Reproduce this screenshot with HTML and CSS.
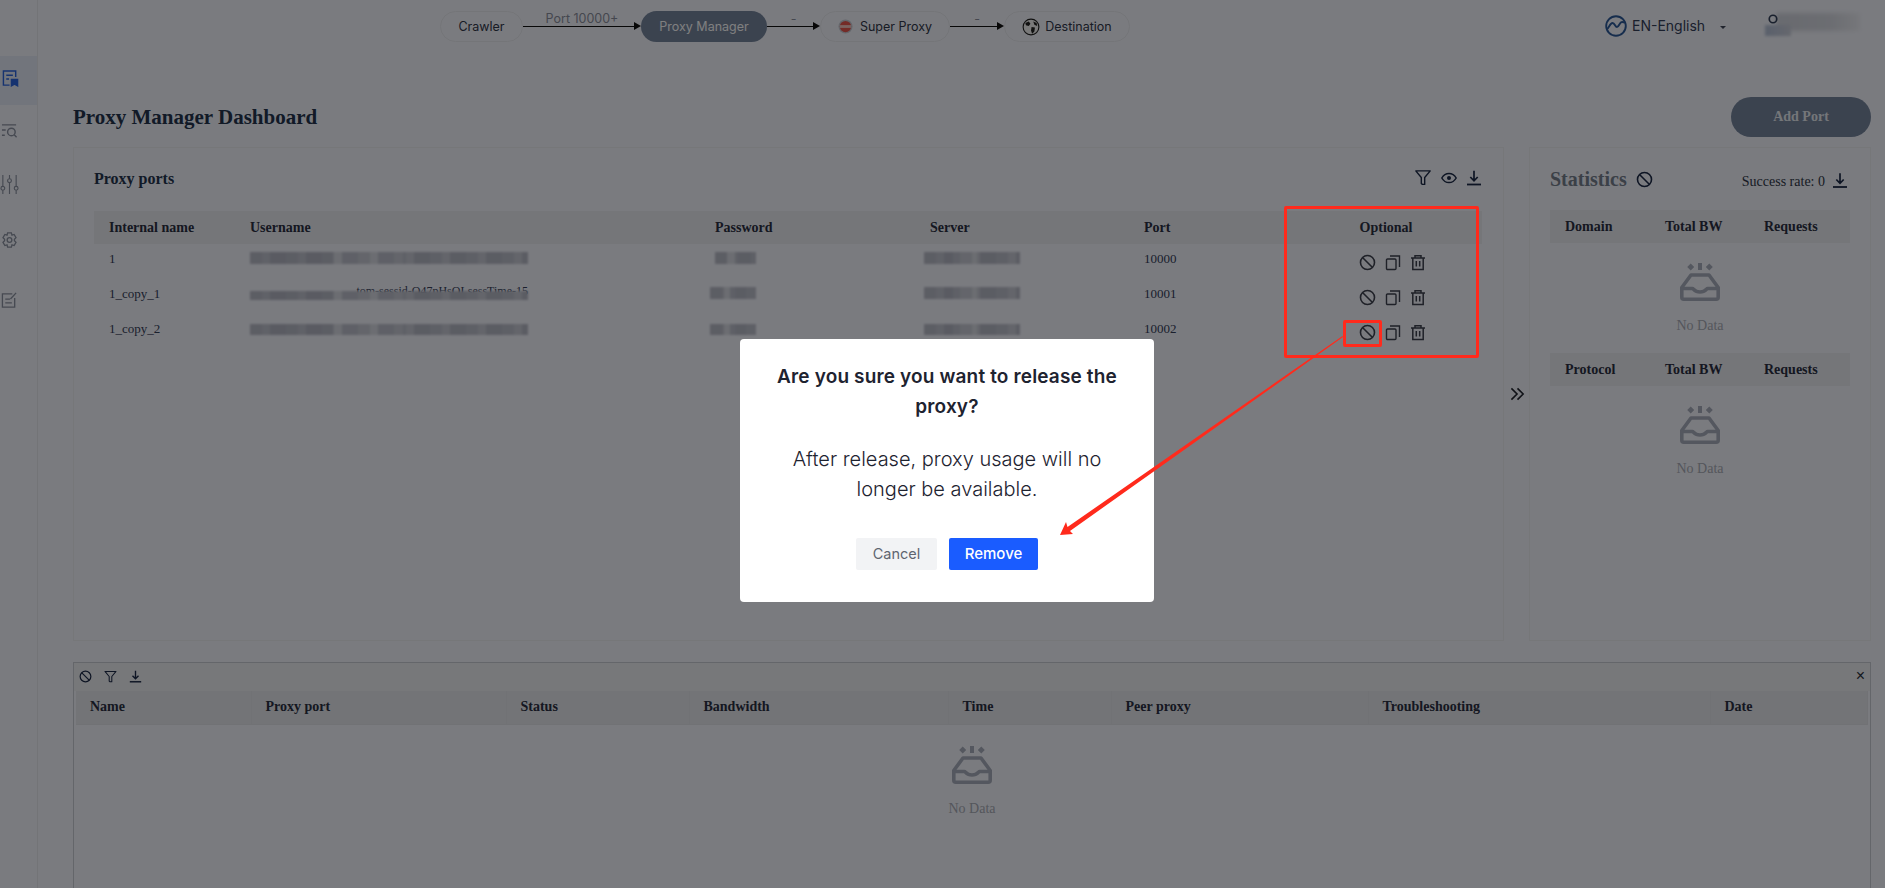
FILE: index.html
```html
<!DOCTYPE html>
<html>
<head>
    <title>Proxy Manager Dashboard</title>
    <link rel="stylesheet" href="styles.css">
</head>
<body>
    <!-- shared icons -->
    <svg class="defs" aria-hidden="true">
        <symbol id="i-ban" viewBox="0 0 16 16">
            <circle cx="8" cy="8" r="6.6" fill="none" stroke="currentColor" stroke-width="1.5"/>
            <path d="M3.5 3.5l9 9" stroke="currentColor" stroke-width="1.5"/>
        </symbol>
        <symbol id="i-copy" viewBox="0 0 16 16">
            <rect x="1.5" y="4.5" width="9.5" height="10.5" rx="1" fill="none" stroke="currentColor" stroke-width="1.4"/>
            <path d="M5 1.5h9.500v11" fill="none" stroke="currentColor" stroke-width="1.4"/>
        </symbol>
        <symbol id="i-trash" viewBox="0 0 16 16">
            <path d="M1 3.500h14M5 3V1.300h6V3M2.800 3.500V15h10.400V3.500M6.300 6.500v5.500M9.700 6.500v5.500" fill="none" stroke="currentColor" stroke-width="1.500"/>
        </symbol>
        <symbol id="i-filter" viewBox="0 0 16 16">
            <path d="M1.200 1.800h13.600L9.600 8v6.500H7.400l-1-.8V8z" fill="none" stroke="currentColor" stroke-width="1.300" stroke-linejoin="round"/>
        </symbol>
        <symbol id="i-eye" viewBox="0 0 16 16">
            <path d="M.8 8C2.500 5 5 3.400 8 3.400S13.500 5 15.200 8C13.500 11 11 12.600 8 12.600S2.500 11 .8 8z" fill="none" stroke="currentColor" stroke-width="1.500"/>
            <circle cx="8" cy="8" r="2" fill="currentColor"/>
        </symbol>
        <symbol id="i-down" viewBox="0 0 16 16">
            <path d="M8 .8v9.500M4.300 7L8 10.800 11.700 7" fill="none" stroke="currentColor" stroke-width="1.700"/>
            <path d="M1 14.500h14" stroke="currentColor" stroke-width="1.800"/>
        </symbol>
        <symbol id="i-empty" viewBox="0 0 40 38">
            <path d="M10.700 .5l3.500 3.500-3.500 3.500-3.500-3.500zM29.300 .5l3.500 3.500-3.500 3.500-3.500-3.500z" fill="currentColor"/>
            <rect x="18" y="0" width="4" height="7" fill="currentColor"/>
            <path d="M11 12h18l9.200 12.500v9.700a2 2 0 0 1-2 2H3.800a2 2 0 0 1-2-2V24.500z" fill="none" stroke="currentColor" stroke-width="3.600" stroke-linejoin="round"/>
            <path d="M2 25.500h10.500c1 0 2 3.500 7.500 3.500s6.500-3.500 7.500-3.500H38" fill="none" stroke="currentColor" stroke-width="3.600"/>
        </symbol>
    </svg>

    <div class="page">
        <aside class="sidebar">
            <div class="side-item active">
                <svg viewBox="0 0 18 18" fill="none" stroke="currentColor" stroke-width="1.500">
                    <path d="M8 16.500H1.500v-15h13V8M4.500 6h7M4.500 10h3"/>
                    <path d="M10 10.500h6.500v6.800l-3.200-1.800-3.300 1.800z" fill="currentColor"/>
                </svg>
            </div>
            <div class="side-item">
                <svg viewBox="0 0 18 18" fill="none" stroke="currentColor" stroke-width="1.500">
                    <path d="M1 2.500h15M1 8h4M1 13.500h3"/>
                    <circle cx="11" cy="10" r="4"/>
                    <path d="M14 13l2.500 2.500"/>
                </svg>
            </div>
            <div class="side-item">
                <svg viewBox="0 0 20 22" fill="none" stroke="currentColor" stroke-width="1.200">
                    <path d="M3 1v12M3 17v4M10 1v4M10 9v12M17 1v12M17 17v4"/>
                    <circle cx="3" cy="15" r="2"/>
                    <circle cx="10" cy="7" r="2"/>
                    <circle cx="17" cy="15" r="2"/>
                </svg>
            </div>
            <div class="side-item">
                <svg viewBox="0 0 18 18" fill="none" stroke="currentColor" stroke-width="1.400">
                    <path d="M7 1.500h4l.6 2.300 2.300-.7 2 3.400L14.200 8.300v1.400l1.700 1.800-2 3.400-2.300-.7L11 16.500H7l-.6-2.300-2.300.7-2-3.400 1.700-1.800V8.300L2.100 6.500l2-3.400 2.300.7z"/>
                    <circle cx="9" cy="9" r="2.500"/>
                </svg>
            </div>
            <div class="side-item">
                <svg viewBox="0 0 18 18" fill="none" stroke="currentColor" stroke-width="1.400">
                    <path d="M12 2.500H1.500v14h13V7M4.500 8h5M4.500 12h7M10 8l6-6.500"/>
                </svg>
            </div>
        </aside>

        <main class="content">
            <header class="topbar">
                <div class="pipeline">
                    <div class="node node-crawler">Crawler</div>
                    <div class="link link-port"><span>Port 10000+</span></div>
                    <div class="node node-manager">Proxy Manager</div>
                    <div class="link link-a"><span>-</span></div>
                    <div class="node node-super">
                        <svg class="node-icon" viewBox="0 0 16 16">
                            <circle cx="8" cy="8" r="7.500" fill="#c9ccd6"/>
                            <circle cx="8" cy="8" r="6" fill="#e8574f"/>
                            <rect x="2" y="6.500" width="12" height="3" fill="#f5c4c0"/>
                        </svg>
                        Super Proxy
                    </div>
                    <div class="link link-b"><span>-</span></div>
                    <div class="node node-dest">
                        <svg class="node-icon globe" viewBox="0 0 16 16">
                            <circle cx="8" cy="8" r="7" fill="#f4f4f4" stroke="#222" stroke-width="1"/>
                            <path d="M3 4.500l3-1.500 1.500 2L6 7 3.500 6.500zM8.500 8l3 .5-.5 3.500-2 2-1-3zM10 3l3 1.500.5 2.500-2.500-1z" fill="#222"/>
                        </svg>
                        Destination
                    </div>
                </div>
                <div class="top-right">
                    <svg class="lang-icon" viewBox="0 0 22 22" fill="none" stroke="#2c5a9a" stroke-width="1.900">
                        <circle cx="11" cy="11" r="9.800"/>
                        <path d="M2 14c2-1 3-6 5.500-6S10 12 12 12s2.500-5 5-5 3 1 3.500 1"/>
                    </svg>
                    <span class="lang-text">EN-English</span>
                    <span class="lang-caret"></span>
                    <div class="user">
                        <div class="user-blur"></div>
                        <div class="user-blur-low"></div>
                        <svg class="user-icon" viewBox="0 0 12 12" fill="none" stroke="#33405a" stroke-width="2">
                            <circle cx="6" cy="6" r="4.500"/>
                        </svg>
                    </div>
                </div>
            </header>

            <div class="title-row">
                <h1>Proxy Manager Dashboard</h1>
                <button class="add-port">Add Port</button>
            </div>

            <div class="panels">
                <section class="panel ports">
                    <div class="ports-head">
                        <h2>Proxy ports</h2>
                        <div class="ports-tools">
                            <svg class="tool tool-filter"><use href="#i-filter"/></svg>
                            <svg class="tool"><use href="#i-eye"/></svg>
                            <svg class="tool"><use href="#i-down"/></svg>
                        </div>
                    </div>
                    <table class="grid ports-table">
                        <colgroup>
                            <col class="c-name"><col class="c-user"><col class="c-pass"><col class="c-server"><col class="c-port"><col class="c-opt">
                        </colgroup>
                        <thead>
                            <tr>
                                <th>Internal name</th>
                                <th>Username</th>
                                <th>Password</th>
                                <th>Server</th>
                                <th>Port</th>
                                <th class="center">Optional</th>
                            </tr>
                        </thead>
                        <tbody>
                            <tr>
                                <td>1</td>
                                <td><div class="mosaic m-user"></div></td>
                                <td><div class="mosaic m-pass"></div></td>
                                <td><div class="mosaic m-server"></div></td>
                                <td>10000</td>
                                <td class="ops"><svg class="op-ban"><use href="#i-ban"/></svg><svg class="op"><use href="#i-copy"/></svg><svg class="op"><use href="#i-trash"/></svg></td>
                            </tr>
                            <tr>
                                <td>1_copy_1</td>
                                <td><div class="peek">tom-sessid-Q47pHsQLsessTime-15</div><div class="mosaic m-user thin"></div></td>
                                <td><div class="mosaic m-pass wide"></div></td>
                                <td><div class="mosaic m-server"></div></td>
                                <td>10001</td>
                                <td class="ops"><svg class="op-ban"><use href="#i-ban"/></svg><svg class="op"><use href="#i-copy"/></svg><svg class="op"><use href="#i-trash"/></svg></td>
                            </tr>
                            <tr>
                                <td>1_copy_2</td>
                                <td><div class="mosaic m-user low"></div></td>
                                <td><div class="mosaic m-pass wide low"></div></td>
                                <td><div class="mosaic m-server low"></div></td>
                                <td>10002</td>
                                <td class="ops"><svg class="op-ban"><use href="#i-ban"/></svg><svg class="op"><use href="#i-copy"/></svg><svg class="op"><use href="#i-trash"/></svg></td>
                            </tr>
                        </tbody>
                    </table>
                </section>

                <div class="gutter">
                    <svg class="chevrons" viewBox="0 0 16 14" fill="none" stroke="#20242e" stroke-width="1.700">
                        <path d="M1.500 1l6 6-6 6M8 1l6 6-6 6"/>
                    </svg>
                </div>

                <section class="panel stats">
                    <div class="stats-head">
                        <h2 class="stats-title">Statistics</h2>
                        <svg class="stats-ban"><use href="#i-ban"/></svg>
                        <span class="rate">Success rate: 0</span>
                        <svg class="stats-down"><use href="#i-down"/></svg>
                    </div>
                    <table class="grid stats-table">
                        <colgroup><col class="s-a"><col class="s-b"><col class="s-c"></colgroup>
                        <thead><tr><th>Domain</th><th>Total BW</th><th>Requests</th></tr></thead>
                    </table>
                    <div class="empty stats-empty">
                        <svg class="empty-icon"><use href="#i-empty"/></svg>
                        <span>No Data</span>
                    </div>
                    <table class="grid stats-table">
                        <colgroup><col class="s-a"><col class="s-b"><col class="s-c"></colgroup>
                        <thead><tr><th>Protocol</th><th>Total BW</th><th>Requests</th></tr></thead>
                    </table>
                    <div class="empty stats-empty">
                        <svg class="empty-icon"><use href="#i-empty"/></svg>
                        <span>No Data</span>
                    </div>
                </section>
            </div>

            <section class="log">
                <div class="log-bar">
                    <svg class="log-tool"><use href="#i-ban"/></svg>
                    <svg class="log-tool"><use href="#i-filter"/></svg>
                    <svg class="log-tool"><use href="#i-down"/></svg>
                    <span class="log-close">×</span>
                </div>
                <table class="grid log-table">
                    <colgroup>
                        <col class="l-1"><col class="l-2"><col class="l-3"><col class="l-4"><col class="l-5"><col class="l-6"><col class="l-7"><col class="l-8">
                    </colgroup>
                    <thead>
                        <tr>
                            <th>Name</th>
                            <th>Proxy port</th>
                            <th>Status</th>
                            <th>Bandwidth</th>
                            <th>Time</th>
                            <th>Peer proxy</th>
                            <th>Troubleshooting</th>
                            <th>Date</th>
                        </tr>
                    </thead>
                </table>
                <div class="empty log-empty">
                    <svg class="empty-icon"><use href="#i-empty"/></svg>
                    <span>No Data</span>
                </div>
            </section>
        </main>
    </div>

    <!-- dialog and the red marks drawn over the screenshot -->
    <div class="mask"></div>
    <div class="modal">
        <h3>Are you sure you want to release the proxy?</h3>
        <p>After release, proxy usage will no longer be available.</p>
        <div class="modal-btns">
            <button class="btn-cancel">Cancel</button>
            <button class="btn-remove">Remove</button>
        </div>
    </div>
    <div class="mark mark-col"></div>
    <div class="mark mark-ban"></div>
    <svg class="mark-arrow" viewBox="0 0 1885 888">
        <polygon points="1060,535 1073,534 1070,531 1343,337 1342.500,336 1067.500,527 1066,522" fill="#ff2a1c"/>
    </svg>
</body>
</html>
```

FILE: styles.css
```css
* {
    box-sizing: border-box;
}

html, body {
    margin: 0;
    height: 888px;
    overflow: hidden;
}

body {
    background-color: #f5f7ff;
    font-family: "Liberation Serif", serif;
    color: #2a3040;
}

.defs {
    display: none;
}

.page {
    display: flex;
    height: 888px;
}

/* Sidebar */
.sidebar {
    width: 38px;
    flex-shrink: 0;
    padding-top: 56px;
    border-right: 1px solid #e6e8ef;
}

.side-item {
    height: 52px;
    padding-left: 1px;
    color: #8c93a3;
    display: flex;
    align-items: center;
}

.side-item svg {
    width: 17px;
    height: 18px;
}

.side-item:nth-child(1) {
    height: 49px;
    padding: 0 0 5px 2px;
    background: #e4eaf8;
    color: #2c66e0;
}

.side-item:nth-child(3) {
    height: 54px;
    padding-left: 0;
}

.side-item:nth-child(3) svg {
    width: 19px;
    height: 21px;
}

.side-item:nth-child(4) {
    height: 58px;
}

.side-item:nth-child(5) {
    height: 62px;
}

/* Main column */
.content {
    flex: 1;
    min-width: 0;
    padding: 0 14px 0 35px;
}

.topbar {
    height: 97px;
    display: flex;
    align-items: flex-start;
    font-family: Inter, sans-serif;
}

.pipeline {
    display: flex;
    margin-left: 367px;
    margin-top: 11px;
    font-size: 12.5px;
}

.node {
    height: 31px;
    border-radius: 16px;
    border: 1px solid #e9ebf1;
    display: flex;
    align-items: center;
    justify-content: center;
    gap: 7px;
    color: #30384a;
    white-space: nowrap;
}

.node-crawler { width: 83px; }
.node-super { width: 130px; }
.node-dest { width: 126px; gap: 5px; }

.node-manager {
    width: 126px;
    background: #76869f;
    border: none;
    color: #fff;
}

.node-icon {
    width: 15px;
    height: 15px;
}

.node-icon.globe {
    width: 18px;
    height: 18px;
}

.link {
    position: relative;
    height: 31px;
}

.link-port { width: 118px; }
.link-a { width: 53px; }
.link-b { width: 54px; }

.link::before {
    content: "";
    position: absolute;
    left: 0;
    right: 5px;
    top: 15px;
    border-top: 1px solid #111;
}

.link::after {
    content: "";
    position: absolute;
    right: 0;
    top: 11px;
    border-left: 7px solid #111;
    border-top: 4px solid transparent;
    border-bottom: 4px solid transparent;
}

.link span {
    position: absolute;
    left: 0;
    right: 0;
    top: 0;
    line-height: 16px;
    font-size: 12.5px;
    text-align: center;
    color: #8a8f9e;
}

.top-right {
    margin-left: auto;
    margin-top: 13px;
    display: flex;
    align-items: center;
    height: 25px;
    padding-right: 11px;
}

.lang-icon {
    width: 22px;
    height: 22px;
    margin-right: 5px;
}

.lang-text {
    width: 73px;
    font-size: 14px;
    color: #35405a;
    white-space: nowrap;
}

.lang-caret {
    margin: 3px 0 0 15px;
    border-top: 3px solid #40485a;
    border-left: 3px solid transparent;
    border-right: 3px solid transparent;
}

.user {
    position: relative;
    margin-left: 39px;
    width: 95px;
    height: 25px;
}

.user-icon {
    position: absolute;
    left: 3px;
    top: 1px;
    width: 10px;
    height: 10px;
}

.user-blur {
    position: absolute;
    left: 11px;
    top: 0;
    width: 84px;
    height: 18px;
    background: linear-gradient(to right, #d2d5df, #d8dbe4 65%, #eceef5);
    filter: blur(2px);
}

.user-blur-low {
    position: absolute;
    left: 0;
    top: 12px;
    width: 26px;
    height: 11px;
    background: linear-gradient(to right, #b4c0d8, #ccd0dc);
    filter: blur(1.5px);
}

.title-row {
    height: 40px;
    display: flex;
    align-items: center;
    justify-content: space-between;
}

h1 {
    margin: 0;
    font-size: 21px;
    font-weight: bold;
    color: #24344f;
}

.add-port {
    width: 140px;
    height: 40px;
    border: none;
    border-radius: 20px;
    background: #76869f;
    color: #e9edf3;
    font: bold 14px "Liberation Serif", serif;
}

/* Panels */
.panels {
    display: flex;
    height: 494px;
    margin-top: 10px;
}

.panel {
    border: 1px solid #eceef3;
}

.ports {
    flex: 1;
    padding: 0 21px 0 20px;
}

.ports-head {
    height: 63px;
    padding-bottom: 2px;
    display: flex;
    align-items: center;
    justify-content: space-between;
}

h2 {
    margin: 0;
    font-size: 16px;
    color: #24344f;
}

.ports-tools {
    display: flex;
    align-items: center;
    gap: 9px;
    margin-top: -2px;
}

.tool {
    width: 16px;
    height: 16px;
    color: #1c2a48;
}

.tool-filter {
    width: 18px;
    height: 17px;
}

.gutter {
    width: 25px;
    flex-shrink: 0;
    position: relative;
}

.chevrons {
    position: absolute;
    left: 6px;
    top: 240px;
    width: 15px;
    height: 14px;
}

.stats {
    width: 342px;
    flex-shrink: 0;
    padding: 0 20px;
}

/* Tables */
.grid {
    width: 100%;
    border-collapse: collapse;
    table-layout: fixed;
    font-size: 14px;
}

.grid th {
    height: 33px;
    padding: 0 0 0 15px;
    background: #ebedf3;
    text-align: left;
    font-weight: bold;
    color: #2a2f42;
}

.grid th.center {
    padding: 0;
    text-align: center;
}

.ports-table td {
    height: 35px;
    padding: 8px 0 0 15px;
    vertical-align: top;
    font-size: 13px;
    line-height: 14px;
    color: #36405a;
}

.c-name { width: 141px; }
.c-user { width: 465px; }
.c-pass { width: 215px; }
.c-server { width: 214px; }
.c-port { width: 161px; }

.ports-table td.ops {
    padding: 10px 0 0 12px;
    text-align: center;
    line-height: 0;
    color: #3e4250;
}

.op-ban {
    width: 17px;
    height: 17px;
    margin-right: 9px;
}

.op {
    width: 16px;
    height: 17px;
    margin-right: 9px;
}

.op:last-child {
    margin-right: 0;
}

.mosaic {
    height: 12px;
    background-color: #cfd2dc;
    background-image:
        linear-gradient(to right, rgba(170, 173, 188, 0.5) 0, rgba(170, 173, 188, 0.5) 30%, transparent 30%, transparent 55%, rgba(170, 173, 188, 0.35) 55%, rgba(170, 173, 188, 0.35) 100%),
        repeating-linear-gradient(to right, #c8cbd6 0, #c8cbd6 12px, #d8dbe4 12px, #d8dbe4 20px, #bec1ce 20px, #bec1ce 36px);
    filter: blur(1px);
}

.m-user { width: 278px; }
.m-pass { width: 41px; }
.m-server { width: 96px; margin-left: -6px; }
.m-pass.wide { width: 46px; margin-left: -5px; }

.mosaic.low {
    margin-top: 2px;
    height: 11px;
}

.m-user.thin {
    position: relative;
    height: 9px;
    margin-top: -7px;
}

.peek {
    margin-top: -3px;
    width: 278px;
    white-space: nowrap;
    line-height: 14px;
    font-size: 12px;
    text-align: right;
    color: #36405a;
}

/* Statistics */
.stats-head {
    height: 62px;
    display: flex;
    align-items: center;
}

.stats-title {
    font-size: 20px;
    color: #77808f;
    padding-top: 1px;
}

.stats-ban {
    width: 17px;
    height: 17px;
    margin-left: 9px;
    color: #1c2a48;
}

.rate {
    margin-left: auto;
    font-size: 14px;
    color: #2f3648;
    padding-top: 6px;
}

.stats-down {
    width: 16px;
    height: 17px;
    margin-left: 7px;
    margin-right: 2px;
    margin-top: 3px;
    color: #1c2a48;
}

.s-a { width: 100px; }
.s-b { width: 99px; }

.empty {
    display: flex;
    flex-direction: column;
    align-items: center;
    font-size: 14px;
    color: #a9adb8;
}

.empty-icon {
    width: 40px;
    height: 38px;
    margin-bottom: 17px;
    color: #a9afbe;
}

.stats-empty {
    height: 110px;
    padding-top: 20px;
}

/* Log panel */
.log {
    margin-top: 21px;
    height: 300px;
    border: 1px solid #c9ccd4;
    border-bottom: none;
    padding: 0 2px;
}

.log-bar {
    height: 28px;
    display: flex;
    align-items: center;
    padding: 0 0 2px 5px;
    gap: 12px;
    background: #eff1f5;
    margin: 0 -2px;
}

.log-tool {
    width: 13px;
    height: 13px;
    color: #1c2a48;
}

.log-close {
    margin-left: auto;
    margin-right: 5px;
    font: 16px "Liberation Sans", sans-serif;
    color: #2a3040;
}

.log-table th {
    padding-left: 14px;
    border-right: 1px solid #e2e4ea;
    border-bottom: 1px solid #e2e4ea;
    background: #e6e8ee;
}

.l-1 { width: 175px; }
.l-2 { width: 255px; }
.l-3 { width: 183px; }
.l-4 { width: 259px; }
.l-5 { width: 163px; }
.l-6 { width: 257px; }
.l-7 { width: 342px; }

.log-empty {
    padding-top: 21px;
}

/* Dialog and marks */
.mask {
    position: fixed;
    inset: 0;
    background: rgba(0, 0, 0, 0.5);
}

.modal {
    position: fixed;
    left: 740px;
    top: 339px;
    width: 414px;
    height: 263px;
    padding: 23px 30px 0;
    background: #fff;
    border-radius: 4px;
    text-align: center;
    font-family: Inter, sans-serif;
}

.modal h3 {
    margin: 0;
    font-size: 19px;
    line-height: 30px;
    font-weight: 600;
    letter-spacing: 0.15px;
    color: #1e2330;
}

.modal p {
    margin: 22px 0 0;
    font-size: 20px;
    line-height: 30px;
    font-weight: 300;
    color: #1e2330;
}

.modal-btns {
    display: flex;
    justify-content: center;
    gap: 12px;
    margin-top: 34px;
}

.modal-btns button {
    height: 32px;
    padding-bottom: 3px;
    border: none;
    border-radius: 2px;
    font: 14.5px Inter, sans-serif;
}

.btn-cancel {
    width: 81px;
    background: #f2f3f5;
    color: #5f6570;
}

.modal-btns .btn-remove {
    width: 89px;
    background: #1a5cff;
    color: #fff;
    font-size: 15px;
    font-weight: 500;
}

.mark {
    position: fixed;
    border: 3px solid #ff2a1c;
    border-radius: 2px;
}

.mark-col {
    left: 1284px;
    top: 206px;
    width: 195px;
    height: 152px;
}

.mark-ban {
    left: 1343px;
    top: 320px;
    width: 39px;
    height: 27px;
}

.mark-arrow {
    position: fixed;
    left: 0;
    top: 0;
    width: 1885px;
    height: 888px;
    pointer-events: none;
}
```
